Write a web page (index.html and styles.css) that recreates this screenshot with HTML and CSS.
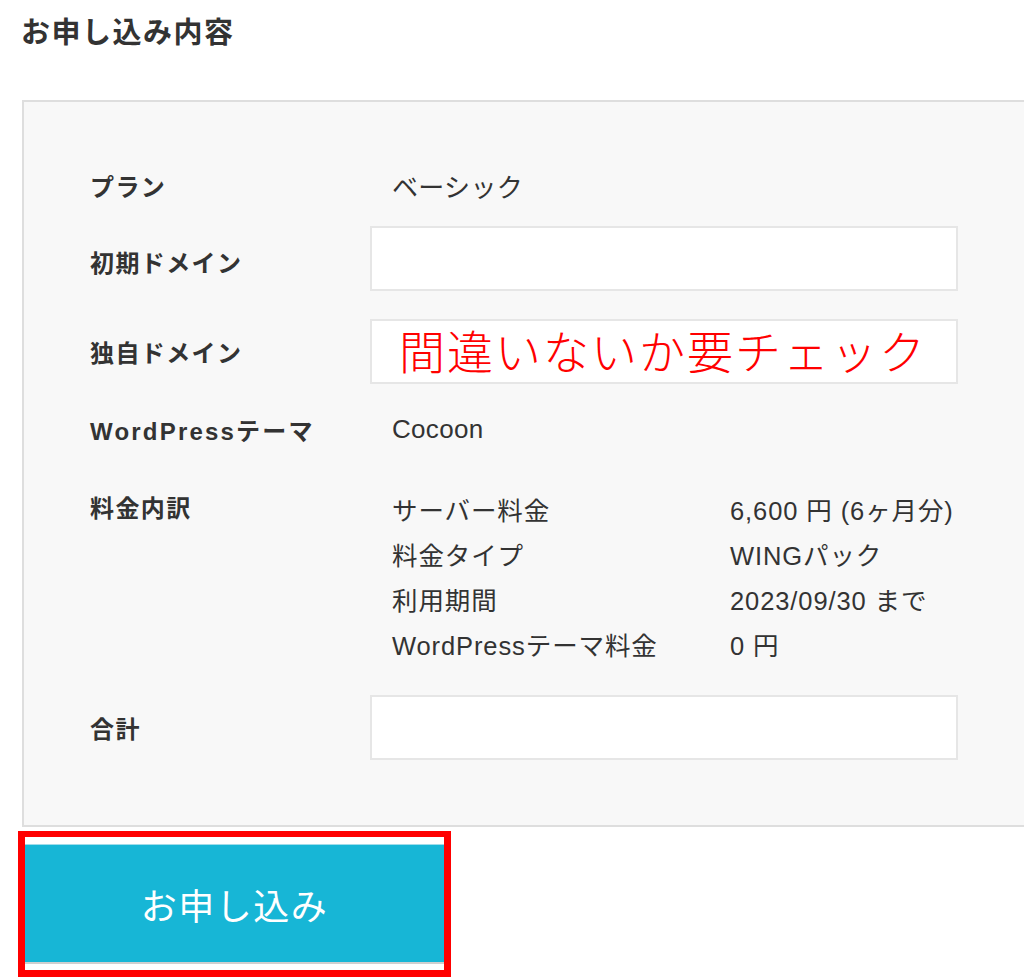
FILE: index.html
```html
<!DOCTYPE html>
<html lang="ja">
<head>
<meta charset="utf-8">
<title>お申し込み内容</title>
<link rel="stylesheet" href="styles.css">
</head>
<body>
<h2 class="title">お申し込み内容</h2>
<div class="panel">
  <div class="row row-plan">
    <div class="label">プラン</div>
    <div class="value">ベーシック</div>
  </div>
  <div class="row row-init">
    <div class="label">初期ドメイン</div>
    <div class="box"></div>
  </div>
  <div class="row row-own">
    <div class="label">独自ドメイン</div>
    <div class="box box-note"><span class="note">間違いないか要チェック</span></div>
  </div>
  <div class="row row-theme">
    <div class="label">WordPressテーマ</div>
    <div class="value">Cocoon</div>
  </div>
  <div class="row row-fee">
    <div class="label">料金内訳</div>
    <div class="fees">
      <div class="fee"><span class="fee-name">サーバー料金</span><span class="fee-val">6,600 円 (6ヶ月分)</span></div>
      <div class="fee"><span class="fee-name">料金タイプ</span><span class="fee-val">WINGパック</span></div>
      <div class="fee"><span class="fee-name">利用期間</span><span class="fee-val">2023/09/30 まで</span></div>
      <div class="fee"><span class="fee-name">WordPressテーマ料金</span><span class="fee-val">0 円</span></div>
    </div>
  </div>
  <div class="row row-total">
    <div class="label">合計</div>
    <div class="box"></div>
  </div>
</div>
<div class="btn-frame">
  <button class="btn" type="button">お申し込み</button>
</div>
</body>
</html>
```

FILE: styles.css
```css
html, body {
  margin: 0;
  padding: 0;
  background: #ffffff;
}
body {
  font-family: "Liberation Sans", "Noto Sans CJK JP", sans-serif;
  color: #333333;
  overflow: hidden;
  width: 1024px;
  height: 978px;
}
.title {
  margin: 0;
  padding: 16px 0 0 21px;
  font-size: 29px;
  line-height: 34px;
  font-weight: bold;
  letter-spacing: 1.5px;
  color: #333;
}
.panel {
  margin: 50px 0 0 22px;
  width: 1020px;
  box-sizing: border-box;
  background: #f8f8f8;
  border: 2px solid #dedede;
  padding: 58px 0 65px 66px;
}
.row {
  display: flex;
  align-items: center;
}
.label {
  width: 280px;
  flex: none;
  font-size: 24px;
  font-weight: bold;
  letter-spacing: 1.4px;
  color: #333;
}
.label-latin {
  letter-spacing: 2px;
}
.value {
  padding-left: 22px;
  font-size: 26px;
  letter-spacing: 0.3px;
  color: #333;
}
.row-plan { height: 50px; }
.row-init { margin-top: 16px; }
.row-init .label { padding-top: 6px; }
.row-own { margin-top: 28px; }
.row-theme { margin-top: 20px; height: 50px; }
.row-theme .label { letter-spacing: 2.2px; }
.row-fee { margin-top: 32px; align-items: flex-start; }
.row-fee .label { line-height: 45px; }
.row-total { margin-top: 29px; }
.box {
  width: 588px;
  height: 65px;
  box-sizing: border-box;
  background: #ffffff;
  border: 2px solid #e6e6e6;
}
.box-note {
  display: flex;
  align-items: center;
  padding-left: 27px;
  overflow: visible;
}
.note {
  font-family: "Noto Sans CJK JP", sans-serif;
  font-size: 46px;
  line-height: 46px;
  font-weight: 300;
  letter-spacing: 2px;
  color: #ff0000;
  white-space: nowrap;
  margin-top: -6px;
}
.fees {
  padding-left: 22px;
}
.fee {
  display: flex;
  height: 45px;
  align-items: center;
  font-size: 25.5px;
  letter-spacing: 0.9px;
  color: #333;
}
.fee-name {
  width: 338px;
  flex: none;
}
.btn-frame {
  margin: 4px 0 0 18px;
  width: 433px;
  box-sizing: border-box;
  border: 7px solid #ff0000;
  border-top-width: 6px;
  background: #ffffff;
  padding: 7px 0 6px 0;
}
.btn {
  display: block;
  width: 100%;
  height: 120px;
  border: none;
  border-top: 1px solid #9fdcea;
  border-bottom: 2px solid #cfcfcf;
  background: #17b6d6;
  color: #ffffff;
  font-family: "Noto Sans CJK JP", sans-serif;
  font-size: 36px;
  letter-spacing: 1.5px;
  padding: 0;
  margin: 0;
}
```
